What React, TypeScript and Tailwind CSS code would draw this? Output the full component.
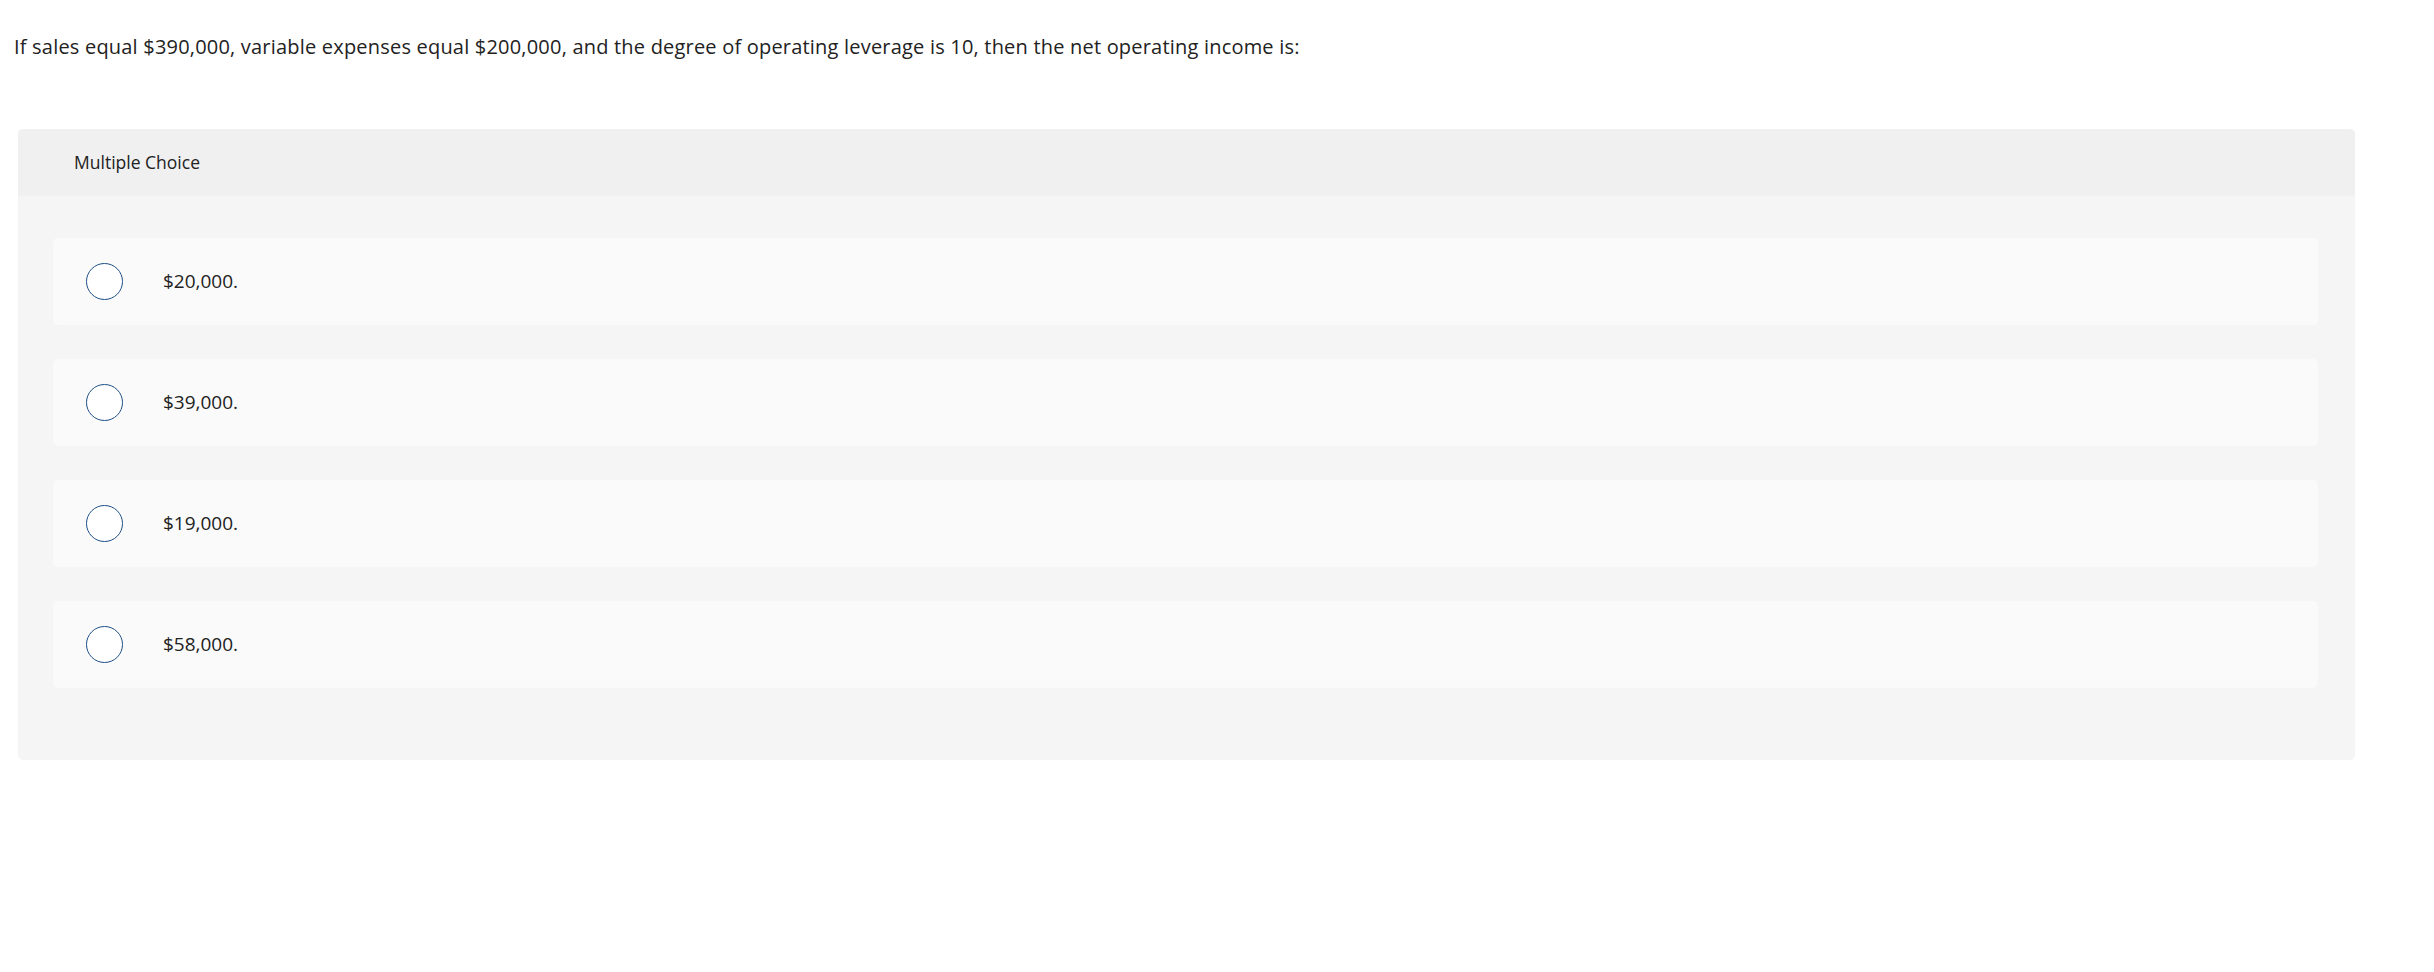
import React from 'react';

const choices = ['$20,000.', '$39,000.', '$19,000.', '$58,000.'];

const Radio = () => (
  <span className="block w-[37px] h-[37px] rounded-full border border-[#1f4f87] bg-white shrink-0" />
);

export default function App() {
  return (
    <div className="min-h-screen bg-white text-[#222] font-['Open_Sans','Liberation_Sans',sans-serif]">
      {/* question */}
      <p className="pl-[14px] pt-[33px] text-[20px] leading-[28px] tracking-[0.2px]">
        If sales equal $390,000, variable expenses equal $200,000, and the degree of operating leverage is 10, then the net operating income is:
      </p>

      {/* answer panel */}
      <div className="ml-[18px] mt-[68px] w-[2337px] rounded-[5px] bg-[#f5f5f5] overflow-hidden">
        <div className="h-[67px] bg-[#f0f0f0] flex items-center pl-[56px] text-[17.5px]">
          Multiple Choice
        </div>
        <div className="pt-[42px] pb-[72px] pl-[35px] pr-[37px] flex flex-col gap-[34px]">
          {choices.map((c) => (
            <div key={c} className="h-[87px] rounded-[5px] bg-[#fafafa] flex items-center pl-[33px]">
              <Radio />
              <span className="ml-[40px] text-[19px]">{c}</span>
            </div>
          ))}
        </div>
      </div>
    </div>
  );
}
